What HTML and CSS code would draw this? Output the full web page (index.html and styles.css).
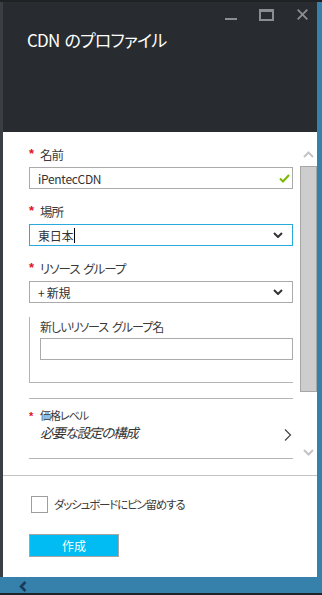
FILE: index.html
```html
<!DOCTYPE html>
<html lang="ja">
<head>
<meta charset="utf-8">
<title>CDN のプロファイル</title>
<link rel="stylesheet" href="styles.css">
</head>
<body>
<div class="app">
  <div class="topline"></div>
  <div class="leftstrip"></div>
  <main class="blade">
    <header class="blade-header">
      <div class="winbar">
        <svg class="wc wc-min" width="12" height="12" viewBox="0 0 12 12"><rect x="0" y="9" width="12" height="2"/></svg>
        <svg class="wc wc-max" width="15" height="12" viewBox="0 0 15 12"><path d="M0 0H15V12H0Z M2 3V10H13V3Z" fill-rule="evenodd"/></svg>
        <svg class="wc wc-close" width="11" height="11" viewBox="0 0 11 11"><path d="M0.7 0.7L10.3 10.3M10.3 0.7L0.7 10.3" stroke-width="1.8" fill="none"/></svg>
      </div>
      <h1 class="title">CDN のプロファイル</h1>
    </header>
    <section class="blade-body">
      <div class="scrollarea">
        <div class="form">
          <div class="field">
            <div class="label"><span class="req">*</span>名前</div>
            <div class="box"><span class="val">iPentecCDN</span>
              <svg class="ok" width="11" height="9" viewBox="0 0 11 9"><path d="M1 4.5L4 7.5L10 1" stroke="#7ab800" stroke-width="2" fill="none"/></svg>
            </div>
          </div>
          <div class="field">
            <div class="label"><span class="req">*</span>場所</div>
            <div class="box box-focus"><span class="val">東日本<span class="caret"></span></span>
              <svg class="dd" width="10" height="6" viewBox="0 0 10 6"><path d="M1 1L5 5L9 1" stroke="#333" stroke-width="2" fill="none"/></svg>
            </div>
          </div>
          <div class="field">
            <div class="label"><span class="req">*</span>リソース グループ</div>
            <div class="box"><span class="val">+ 新規</span>
              <svg class="dd" width="10" height="6" viewBox="0 0 10 6"><path d="M1 1L5 5L9 1" stroke="#333" stroke-width="2" fill="none"/></svg>
            </div>
          </div>
          <div class="group">
            <div class="sublabel">新しいリソース グループ名</div>
            <div class="box"></div>
          </div>
          <div class="sep sep-1"></div>
          <div class="pricing">
            <div class="pricing-text">
              <div class="plabel"><span class="req req-small">*</span>価格レベル</div>
              <div class="pvalue">必要な設定の構成</div>
            </div>
            <svg class="chev-right" width="8" height="12" viewBox="0 0 8 12"><path d="M1 0.5L6.5 6L1 11.5" stroke="#444" stroke-width="1.2" fill="none"/></svg>
          </div>
          <div class="sep"></div>
        </div>
        <div class="vscroll">
          <svg class="sc-up" width="11" height="7" viewBox="0 0 11 7"><path d="M1 6L5.5 1.5L10 6" stroke="#c4c4c4" stroke-width="2" fill="none"/></svg>
          <div class="thumb"></div>
          <svg class="sc-down" width="11" height="7" viewBox="0 0 11 7"><path d="M1 1L5.5 5.5L10 1" stroke="#c4c4c4" stroke-width="2" fill="none"/></svg>
        </div>
      </div>
      <footer class="blade-footer">
        <div class="pin"><span class="checkbox"></span><span class="pin-text">ダッシュボードにピン留めする</span></div>
        <button class="create" type="button">作成</button>
      </footer>
    </section>
  </main>
  <div class="rightstrip"></div>
  <div class="statusbar">
    <svg class="back" width="8" height="11" viewBox="0 0 8 11"><path d="M6.5 1L2 5.5L6.5 10" stroke="#1c3b5a" stroke-width="2.6" fill="none"/></svg>
  </div>
  <div class="bottomline"></div>
</div>
</body>
</html>
```
FILE: styles.css
```css
* { box-sizing: border-box; }
html, body { margin: 0; padding: 0; }
body {
  background: #24282c;
  font-family: "Noto Sans CJK JP", "Noto Sans", sans-serif;
  font-feature-settings: "palt";
  color: #3b3b3b;
}
.app {
  width: 322px;
  height: 595px;
  display: grid;
  grid-template-columns: 3px 314px 5px;
  grid-template-rows: 2px 575px 16px 2px;
  overflow: hidden;
}
.topline { grid-column: 1 / -1; grid-row: 1; background: #1e2225; }
.leftstrip { grid-column: 1; grid-row: 2; background: #3b3f43; }
.rightstrip { grid-column: 3; grid-row: 2; background: #3680ac; }
.statusbar {
  grid-column: 1 / -1; grid-row: 3;
  background: #3680ac;
  display: flex; align-items: flex-start;
  padding: 4px 0 0 19px;
}
.bottomline { grid-column: 1 / -1; grid-row: 4; background: #1f2326; }

.blade { grid-column: 2; grid-row: 2; display: flex; flex-direction: column; min-height: 0; }
.blade-header { height: 130px; flex: none; background: #282c30; }
.winbar {
  display: flex; justify-content: flex-end; align-items: flex-start;
  padding: 7px 9px 0 0; height: 19px;
}
.wc { display: block; fill: #8b8e91; stroke: #8b8e91; }
.wc-min, .wc-max { stroke: none; }
.wc-max { margin-left: 22px; }
.wc-close { margin-left: 23px; }
.title {
  margin: 7px 0 0 0; padding-left: 24px;
  font-size: 17px; line-height: 24px; font-weight: 400;
  letter-spacing: -0.8px; word-spacing: 2px;
  color: #ffffff;
}

.blade-body { flex: 1; background: #ffffff; display: flex; flex-direction: column; min-height: 0; }
.scrollarea {
  height: 344px; flex: none;
  display: flex;
  border-bottom: 1px solid #c3c3c3;
  overflow: hidden;
}
.form { flex: 1; padding: 14px 7px 0 26px; overflow: hidden; }
.vscroll {
  width: 17px; flex: none;
  display: flex; flex-direction: column; align-items: center;
  padding-top: 19px;
}
.vscroll svg { display: block; }
.thumb {
  align-self: stretch;
  margin-top: 8px; height: 226px;
  background: #cdcdcd; border: 1px solid #a6a6a6;
}
.sc-down { margin-top: 57px; }

.field { margin-bottom: 14px; }
.label {
  display: flex; align-items: flex-start;
  height: 18px; line-height: 18px; font-size: 12.5px;
  letter-spacing: -1px; word-spacing: 2px;
  margin-bottom: 3px; color: #3b3b3b;
  white-space: pre;
}
.req {
  width: 11px; flex: none;
  font-family: "Liberation Sans", sans-serif; font-weight: 700;
  font-size: 13px; line-height: 15px; color: #e3101f;
  letter-spacing: 0;
}
.box {
  height: 22px;
  border: 1px solid #ababab;
  display: flex; align-items: center; justify-content: space-between;
  padding: 0 8px 0 8px;
  font-size: 12px; color: #333;
  letter-spacing: -0.3px;
  background: #fff;
}
.box-focus { border-color: #2aa9dc; }
.val { display: flex; align-items: center; white-space: pre; }
.caret { display: inline-block; width: 1px; height: 15px; background: #000; margin-left: 1px; }
.ok { display: block; margin-right: -6px; }
.dd { display: block; margin-right: 1px; }

.group {
  margin-top: 2px;
  border-left: 1px solid #b4b4b4;
  border-bottom: 1px solid #b4b4b4;
  padding: 1px 0 22px 10px;
}
.sublabel {
  font-size: 12px; line-height: 18px; height: 18px; margin-bottom: 2px;
  letter-spacing: -1px; word-spacing: 2px; color: #3b3b3b;
}

.sep { height: 1px; background: #b4b4b4; }
.sep-1 { margin-top: 15px; }
.pricing {
  height: 59px;
  display: flex; justify-content: space-between; align-items: flex-start;
  padding-top: 9px;
}
.plabel {
  display: flex; align-items: center; font-size: 11px; line-height: 14px; height: 14px;
  letter-spacing: -1px; color: #3b3b3b;
}
.req-small { font-size: 11px; line-height: 14px; padding-top: 2px; }
.pvalue {
  font-size: 13.5px; line-height: 20px; font-style: italic;
  letter-spacing: -1.2px;
  padding-left: 11px; color: #333;
}
.chev-right { display: block; margin-top: 21px; margin-right: 1px; }

.blade-footer { flex: 1; padding: 20px 0 0 26px; }
.pin { display: flex; align-items: center; gap: 6px; height: 17px; padding-left: 2px; }
.checkbox { width: 17px; height: 17px; border: 1px solid #9e9e9e; background: #fff; flex: none; }
.pin-text { font-size: 11.5px; letter-spacing: -1.2px; color: #3b3b3b; line-height: 17px; }
.create {
  display: block;
  margin-top: 21px;
  width: 90px; height: 23px;
  background: #00bcf2; border: 1px solid #a6a6a6;
  color: #ffffff; font-family: inherit; font-size: 12px;
  padding: 0; line-height: 21px;
}
.back { display: block; }
```
